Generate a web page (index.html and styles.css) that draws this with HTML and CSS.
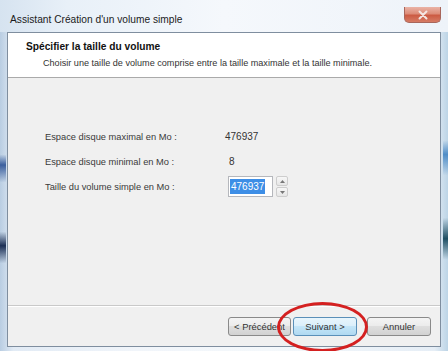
FILE: index.html
```html
<!DOCTYPE html>
<html lang="fr">
<head>
<meta charset="utf-8">
<title>Assistant Création d'un volume simple</title>
<link rel="stylesheet" href="styles.css">
</head>
<body>
<div class="frame">
  <div class="titlebar">
    <span class="title">Assistant Création d'un volume simple</span>
    <div class="close">
      <svg width="12" height="10" viewBox="0 0 12 10"><path d="M2.5 1.5 L9.5 8.5 M9.5 1.5 L2.5 8.5" stroke="#f4e6e2" stroke-width="2" stroke-linecap="round"/></svg>
    </div>
  </div>
  <div class="client">
    <div class="header">
      <div class="h-title">Spécifier la taille du volume</div>
      <div class="h-sub">Choisir une taille de volume comprise entre la taille maximale et la taille minimale.</div>
    </div>
    <div class="content">
      <div class="row"><span class="label">Espace disque maximal en Mo :</span><span class="value">476937</span></div>
      <div class="row"><span class="label">Espace disque minimal en Mo :</span><span class="value v8">8</span></div>
      <div class="row"><span class="label">Taille du volume simple en Mo :</span>
        <div class="spin">
          <div class="input"><span class="sel">476937</span></div>
          <div class="arrows">
            <div class="arr"><svg width="5" height="3" viewBox="0 0 5 3"><path d="M0 3 L2.5 0 L5 3Z" fill="#777"/></svg></div>
            <div class="arr"><svg width="5" height="3" viewBox="0 0 5 3"><path d="M0 0 L2.5 3 L5 0Z" fill="#777"/></svg></div>
          </div>
        </div>
      </div>
    </div>
    <div class="footer">
      <button class="btn b-prev">&lt; Précédent</button>
      <button class="btn b-next">Suivant &gt;</button>
      <button class="btn b-cancel">Annuler</button>
    </div>
  </div>
  <div class="ellipse"></div>
</div>
</body>
</html>
```
FILE: styles.css
```css
html, body { margin: 0; padding: 0; }
body { width: 448px; height: 351px; overflow: hidden; font-family: "Liberation Sans", Arial, sans-serif; }
.frame {
  position: relative;
  width: 448px; height: 351px; box-sizing: border-box;
  padding: 0 7px 4px 7px;
  display: flex; flex-direction: column;
  background:
    linear-gradient(180deg, transparent 0%, transparent 44%, #3b5f9e 47%, transparent 52%, transparent 66%, #1c2f55 70%, transparent 75%) left / 6px 100% no-repeat,
    linear-gradient(180deg, transparent 0%, transparent 40%, #4f8dc7 44%, transparent 50%, transparent 62%, #1f4f63 68%, transparent 74%) right / 5px 100% no-repeat,
    linear-gradient(90deg, #b9cde2 0%, #e2ebf5 3%, #f1f5fa 30%, #f4f8fb 60%, #e6eef6 97%, #bcd4e6 100%);
}
.titlebar {
  height: 32px; flex: none;
  display: flex; align-items: flex-start; justify-content: space-between;
  margin-left: -7px; margin-right: -7px; padding: 0 7px 0 10px;
  background: linear-gradient(90deg, #d6e3f0 0%, #e8f0f8 15%, #f5f8fc 50%, #eef3f9 100%);
}
.title { font-size: 10.2px; color: #1b1b1b; margin-top: 14px; line-height: 12px; }
.close {
  margin-top: 7px; width: 37px; height: 16px;
  border: 1px solid #a8665b; border-top: none; border-radius: 0 0 5px 5px; box-sizing: border-box;
  background: linear-gradient(180deg, #eab3a6 0%, #dd8c78 45%, #cc5b43 55%, #d67b64 100%);
  display: flex; align-items: center; justify-content: center;
}
.client {
  flex: 1; border: 1px solid #7f8e9f; background: #f0f0f0;
  display: flex; flex-direction: column; min-height: 0;
}
.header {
  height: 36px; flex: none; background: #fff;
  border-bottom: 1px solid #aaaaaa;
  padding: 8px 0 0 18px; box-sizing: content-box;
}
.h-title { font-size: 10.2px; font-weight: bold; color: #111; line-height: 12px; }
.h-sub { font-size: 9.1px; color: #333; line-height: 12px; margin: 4px 0 0 17px; }
.content {
  flex: 1; padding: 46px 0 0 37px;
  display: flex; flex-direction: column;
}
.row { display: flex; align-items: center; height: 25px; font-size: 9.3px; color: #3a3a3a; }
.label { width: 180px; }
.value { font-size: 10px; color: #333; }
.v8 { margin-left: 4px; }
.spin { display: flex; align-items: center; gap: 3px; margin-left: 3px; }
.input {
  width: 45px; height: 21px; box-sizing: border-box;
  border: 1px solid #b5b7bc; background: #fff;
  display: flex; align-items: center; padding-left: 1px;
}
.sel { background: #3d8ee6; color: #fff; font-size: 10px; line-height: 15px; padding: 0 1px; }
.arrows { display: flex; flex-direction: column; width: 12px; height: 21px; gap: 1px; }
.arr {
  flex: 1; border: 1px solid #cdcdcd; border-radius: 2px;
  background: linear-gradient(#f7f7f7, #e6e6e6);
  display: flex; align-items: center; justify-content: center;
}
.footer {
  height: 41px; flex: none;
  border-top: 1px solid #c9c9c9; box-shadow: inset 0 1px 0 #fff;
  display: flex; align-items: flex-start; justify-content: flex-end;
  padding: 11px 9px 0 0; box-sizing: border-box;
}
.btn {
  font-family: "Liberation Sans", Arial, sans-serif; font-size: 9.4px; color: #333;
  height: 19px; width: 63px; padding: 0;
  border: 1px solid #8a8a8a; border-radius: 3px;
  background: linear-gradient(180deg, #f4f4f4 0%, #ececec 45%, #dedede 50%, #d2d2d2 100%);
}
.b-prev { margin-right: 2px; }
.b-next {
  width: 64px; border-color: #5a8fb8;
  background: linear-gradient(180deg, #e8f5fc 0%, #dbeffb 45%, #c3e5f8 50%, #b0d9f1 100%);
}
.b-cancel { margin-left: 10px; width: 64px; }
.ellipse {
  position: absolute; left: 277px; top: 302px; width: 91px; height: 50px;
  box-sizing: border-box; border: 3px solid #d42020; border-radius: 50%;
}
```
